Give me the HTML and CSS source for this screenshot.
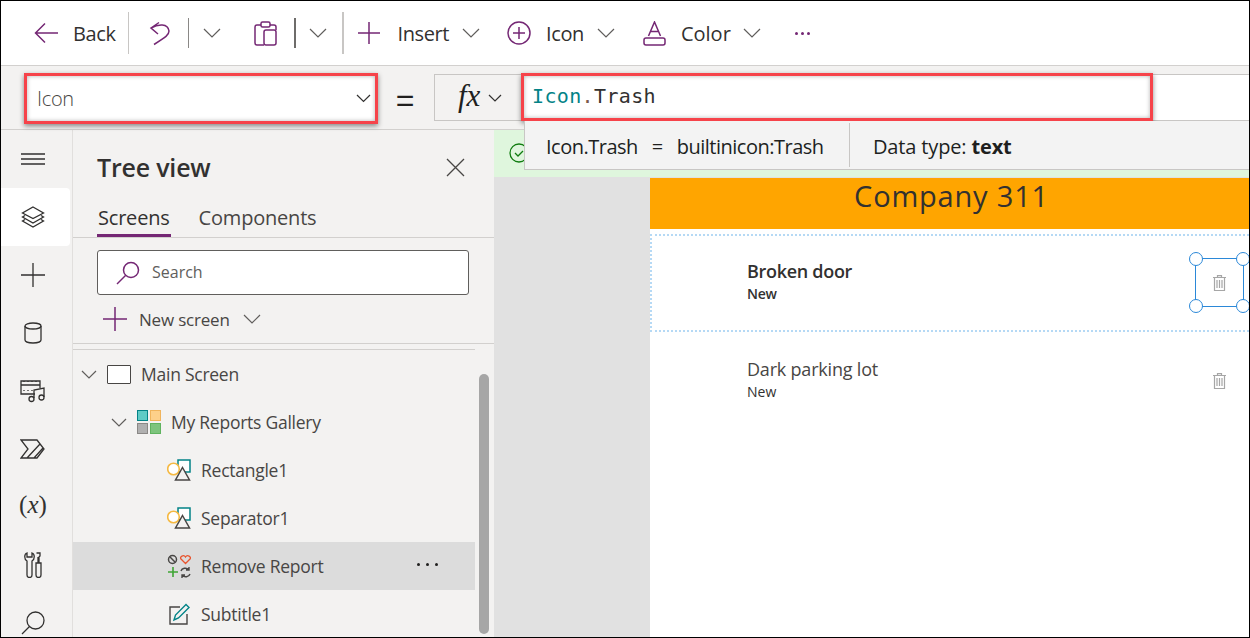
FILE: index.html
```html
<!DOCTYPE html>
<html lang="en">
<head>
    <meta charset="UTF-8">
    <meta name="viewport" content="width=device-width, initial-scale=1.0">
    <title>Tree view</title>
    <link rel="stylesheet" href="styles.css">
</head>
<body>
<div class="frame">
    <!-- command bar -->
    <div class="toolbar">
        <svg class="ic back-ic" width="24" height="22" viewBox="0 0 24 22"><path d="M24 11H2M11 1.500L1.500 11l9.500 9.500"/></svg>
        <span class="tb-text back-text">Back</span>
        <span class="sep sep-tall sep-back"></span>
        <svg class="ic undo-ic" width="24" height="28" viewBox="0 0 24 28"><path d="M11 3.500L3 9l7 6M3 9c7-4 17-5 18 3 0 4-3 6-15 13.500"/></svg>
        <span class="sep sep-short sep-undo"></span>
        <svg class="chev chev-undo" width="18" height="10" viewBox="0 0 18 10"><path d="M1 1l8 8 8-8"/></svg>
        <svg class="ic clip-ic" width="23" height="25" viewBox="0 0 23 25"><path d="M7 4H3a2 2 0 0 0-2 2v16a2 2 0 0 0 2 2h7M16 4h4a2 2 0 0 1 2 2v3"/><rect x="7" y="1" width="9" height="5" rx="1.500"/><rect x="10" y="9" width="12" height="15" rx="2"/></svg>
        <span class="sep sep-short sep-dark sep-clip"></span>
        <svg class="chev chev-clip" width="18" height="10" viewBox="0 0 18 10"><path d="M1 1l8 8 8-8"/></svg>
        <span class="sep sep-tall sep-wide sep-insert"></span>
        <svg class="ic plus-ic" width="22" height="22" viewBox="0 0 22 22"><path d="M11 0v22M0 11h22"/></svg>
        <span class="tb-text insert-text">Insert</span>
        <svg class="chev chev-insert" width="18" height="10" viewBox="0 0 18 10"><path d="M1 1l8 8 8-8"/></svg>
        <svg class="ic circle-ic" width="24" height="24" viewBox="0 0 24 24"><circle cx="12" cy="12" r="11"/><path d="M12 6v12M6 12h12"/></svg>
        <span class="tb-text icon-text">Icon</span>
        <svg class="chev chev-icon" width="18" height="10" viewBox="0 0 18 10"><path d="M1 1l8 8 8-8"/></svg>
        <svg class="ic color-ic" width="23" height="25" viewBox="0 0 23 25"><path d="M5.500 15L11.500 1l6 14M7.500 10.500h8"/><rect x="1" y="17" width="21" height="7" rx="2"/></svg>
        <span class="tb-text color-text">Color</span>
        <svg class="chev chev-color" width="18" height="10" viewBox="0 0 18 10"><path d="M1 1l8 8 8-8"/></svg>
        <span class="more-dots"><i></i><i></i><i></i></span>
    </div>

    <!-- formula bar -->
    <div class="formula-bar">
        <div class="prop-select">
            <span>Icon</span>
            <svg class="chev-dark" width="15" height="9" viewBox="0 0 15 9"><path d="M1 1l6.500 6.500L14 1"/></svg>
        </div>
        <span class="equals">=</span>
        <div class="fx-box">
            <span class="fx">fx</span>
            <svg class="chev-dark" width="14" height="8" viewBox="0 0 14 8"><path d="M1 1l6 6 6-6"/></svg>
        </div>
        <div class="formula-input"><span class="tok">Icon</span><span class="dot">.</span>Trash</div>
        <div class="red-box red-prop"></div>
        <div class="red-box red-formula"></div>
    </div>

    <div class="main">
        <!-- left rail -->
        <div class="rail">
            <div class="rail-btn"><svg width="26" height="12" viewBox="0 0 26 12"><path d="M1 1h24M1 6h24M1 11h24"/></svg></div>
            <div class="rail-btn rail-active"><svg width="24" height="22" viewBox="0 0 24 22"><path d="M12 1l10.500 6L12 12.500 1.500 7zM4 9.500L1.500 11 12 17l10.500-6L20 9.500M4 13.500L1.500 15 12 21l10.500-6L20 13.500"/></svg></div>
            <div class="rail-btn"><svg width="26" height="26" viewBox="0 0 26 26"><path d="M13 1v24M1 13h24"/></svg></div>
            <div class="rail-btn"><svg width="18" height="22" viewBox="0 0 18 22"><ellipse cx="9" cy="4" rx="8" ry="3"/><path d="M1 4v14c0 1.700 3.600 3 8 3s8-1.300 8-3V4"/></svg></div>
            <div class="rail-btn"><svg width="26" height="23" viewBox="0 0 26 23"><path d="M15 14H1V1h19v7M1 5h19M4 1v1M8 1v1M12 1v1M16 1v1M4 10v1M8 10v1M12 10v1"/><path d="M14 18V10l10-2v9"/><circle cx="11.500" cy="19" r="2.500"/><circle cx="21.500" cy="17.500" r="2.500"/></svg></div>
            <div class="rail-btn"><svg width="26" height="20" viewBox="0 0 26 20"><path d="M1 1h16l7 9-7 9H1l7-9zM7 19L20 5M14 19l9-10"/></svg></div>
            <div class="rail-btn rail-var">(<i>x</i>)</div>
            <div class="rail-btn"><svg width="18" height="26" viewBox="0 0 18 26"><path d="M3 1C0 2 0 7 3 9v14a2.500 2.500 0 0 0 5 0V9c3-2 3-7 0-8v4H3zM12.500 1H16v3l-1 1v6M14 5v6M12 11h5v12a2.500 2.500 0 0 1-5 0z"/></svg></div>
            <div class="rail-btn"><svg width="24" height="24" viewBox="0 0 24 24"><circle cx="14.500" cy="9.500" r="8.500"/><path d="M8.500 15.500L1 23"/></svg></div>
        </div>

        <!-- tree panel -->
        <div class="panel">
            <div class="panel-head">
                <span class="panel-title">Tree view</span>
                <svg class="close-ic" width="19" height="19" viewBox="0 0 19 19"><path d="M1 1l17 17M18 1L1 18"/></svg>
            </div>
            <div class="tabs">
                <span class="tab tab-on">Screens</span>
                <span class="tab">Components</span>
            </div>
            <div class="search-box">
                <svg class="ic" width="24" height="24" viewBox="0 0 24 24"><circle cx="15" cy="9" r="7.500"/><path d="M9.500 14.500L1 23"/></svg>
                <span class="search-text">Search</span>
            </div>
            <div class="new-screen">
                <svg class="ic" width="24" height="24" viewBox="0 0 24 24"><path d="M12 0v24M0 12h24"/></svg>
                <span>New screen</span>
                <svg class="chev ns-chev" width="18" height="10" viewBox="0 0 18 10"><path d="M1 1l8 8 8-8"/></svg>
            </div>
            <div class="tree">
                <div class="node lvl-0">
                    <svg class="chev" width="16" height="9" viewBox="0 0 16 9"><path d="M1 1l7 7 7-7"/></svg>
                    <span class="screen-ic"></span>
                    <span>Main Screen</span>
                </div>
                <div class="node lvl-1">
                    <svg class="chev" width="16" height="9" viewBox="0 0 16 9"><path d="M1 1l7 7 7-7"/></svg>
                    <span class="gallery-ic"><i class="g1"></i><i class="g2"></i><i class="g3"></i><i class="g4"></i></span>
                    <span>My Reports Gallery</span>
                </div>
                <div class="node lvl-2">
                    <svg width="24" height="24" viewBox="0 0 24 24"><rect x="11" y="2" width="12" height="12" fill="#fff" stroke="#038387" stroke-width="1.500"/><circle cx="6.500" cy="11" r="5.800" fill="#fff" stroke="#f5b942" stroke-width="1.600"/><path d="M15.500 9.500l7 12.500h-14z" fill="#f3f2f1" stroke="#484644" stroke-width="1.500"/></svg>
                    <span>Rectangle1</span>
                </div>
                <div class="node lvl-2">
                    <svg width="24" height="24" viewBox="0 0 24 24"><rect x="11" y="2" width="12" height="12" fill="#fff" stroke="#038387" stroke-width="1.500"/><circle cx="6.500" cy="11" r="5.800" fill="#fff" stroke="#f5b942" stroke-width="1.600"/><path d="M15.500 9.500l7 12.500h-14z" fill="#f3f2f1" stroke="#484644" stroke-width="1.500"/></svg>
                    <span>Separator1</span>
                </div>
                <div class="node lvl-2 node-on">
                    <svg width="24" height="24" viewBox="0 0 24 24" fill="none"><circle cx="5.500" cy="5.500" r="4" stroke="#484644" stroke-width="1.500"/><path d="M2.800 2.800l5.400 5.400" stroke="#484644" stroke-width="1.500"/><path d="M18.500 9.500l-4.500-4.500c-1.800-2.400 2.800-4.800 4.500-2 1.700-2.800 6.300-.4 4.500 2z" stroke="#e8542e" stroke-width="1.300"/><path d="M6 13v10M1 18h10" stroke="#3fa535" stroke-width="1.600"/><path d="M14 17c.8-3 5.500-4 8-1M23 20c-1 3-5.500 4-8 1M22 13v3h-3M15 24v-3h3" stroke="#484644" stroke-width="1.400"/></svg>
                    <span>Remove Report</span>
                    <span class="node-more"><i></i><i></i><i></i></span>
                </div>
                <div class="node lvl-2">
                    <svg width="24" height="24" viewBox="0 0 24 24" fill="none"><path d="M20 12v10H3V5h10" stroke="#484644" stroke-width="1.400"/><path d="M7 18l1.500-5L19 2.500l3 3L11.500 16z" stroke="#038387" stroke-width="1.400"/></svg>
                    <span>Subtitle1</span>
                </div>
                <div class="scroll-thumb"></div>
            </div>
        </div>

        <!-- canvas -->
        <div class="canvas">
            <div class="status-bar">
                <svg width="20" height="20" viewBox="0 0 20 20" fill="none"><circle cx="10" cy="10" r="9" stroke="#107c10" stroke-width="1.300"/><path d="M6 10l3 3 5-5" stroke="#107c10" stroke-width="1.300"/></svg>
            </div>
            <div class="app-area">
                <div class="app-screen">
                    <div class="app-header">Company 311</div>
                    <div class="gallery-row row-first">
                        <div class="row-text">
                            <div class="row-title row-bold">Broken door</div>
                            <div class="row-sub row-bold">New</div>
                        </div>
                        <svg class="trash" width="13" height="16" viewBox="0 0 13 16"><path d="M0 2.500h13M4.500 2.500V.7h4v1.800M1.500 2.500v13h10v-13M4 5v8M6.500 5v8M9 5v8"/></svg>
                        <div class="sel-box">
                            <i class="handle h-tl"></i><i class="handle h-tr"></i><i class="handle h-bl"></i><i class="handle h-br"></i>
                        </div>
                    </div>
                    <div class="gallery-row">
                        <div class="row-text">
                            <div class="row-title">Dark parking lot</div>
                            <div class="row-sub">New</div>
                        </div>
                        <svg class="trash" width="13" height="16" viewBox="0 0 13 16"><path d="M0 2.500h13M4.500 2.500V.7h4v1.800M1.500 2.500v13h10v-13M4 5v8M6.500 5v8M9 5v8"/></svg>
                    </div>
                </div>
            </div>
        </div>
    </div>

    <!-- formula hint, drops over the canvas -->
    <div class="hint">
        <div class="hint-def"><span>Icon.Trash</span><span class="hint-eq">=</span><span>builtinicon:Trash</span></div>
        <div class="hint-type">Data type: <b>text</b></div>
    </div>
</div>
</body>
</html>
```

FILE: styles.css
```css
* {
    box-sizing: border-box;
}

body {
    margin: 0;
    font-family: 'Open Sans', 'Noto Sans', sans-serif;
    color: #323130;
    background: #fff;
}

svg {
    display: block;
    flex: none;
}

.frame {
    position: relative;
    width: 1250px;
    height: 638px;
    border: 1px solid #000;
    display: flex;
    flex-direction: column;
    overflow: hidden;
}

/* command bar */
.toolbar {
    height: 65px;
    flex: none;
    display: flex;
    align-items: center;
    background: #fff;
    border-bottom: 1px solid #d2d0ce;
}

.ic path, .ic rect, .ic circle {
    fill: none;
    stroke: #742774;
    stroke-width: 1.5;
}

.chev path {
    fill: none;
    stroke: #605e5c;
    stroke-width: 1.2;
}

.chev-dark path {
    fill: none;
    stroke: #323130;
    stroke-width: 1.2;
}

.tb-text {
    font-size: 20px;
    color: #323130;
    letter-spacing: -0.4px;
}

.sep {
    display: block;
    flex: none;
    width: 1px;
}

.sep-tall {
    height: 42px;
    background: #c8c6c4;
}

.sep-wide {
    width: 2px;
}

.sep-short {
    height: 30px;
    background: #8a8886;
}

.sep-dark {
    width: 2px;
    background: #6e6c6a;
}

.back-ic { margin-left: 33px; }
.back-text { margin-left: 15px; }
.sep-back { margin-left: 12px; }
.undo-ic { margin-left: 19px; }
.sep-undo { margin-left: 16px; }
.chev-undo { margin-left: 14px; }
.clip-ic { margin-left: 33px; }
.sep-clip { margin-left: 17px; }
.chev-clip { margin-left: 13px; }
.sep-insert { margin-left: 15px; }
.plus-ic { margin-left: 14px; }
.insert-text { margin-left: 18px; }
.chev-insert { margin-left: 13px; }
.circle-ic { margin-left: 27px; }
.icon-text { margin-left: 15px; }
.chev-icon { margin-left: 13px; }
.color-ic { margin-left: 28px; }
.color-text { margin-left: 15px; letter-spacing: 0; }
.chev-color { margin-left: 12px; }

.more-dots {
    display: flex;
    gap: 3px;
    margin-left: 34px;
}

.more-dots i {
    width: 3px;
    height: 3px;
    border-radius: 50%;
    background: #742774;
}

/* formula bar */
.formula-bar {
    position: relative;
    height: 64px;
    flex: none;
    display: flex;
    align-items: flex-start;
    padding-top: 8px;
    background: #f3f2f1;
    border-bottom: 1px solid #d2d0ce;
}

.prop-select {
    width: 350px;
    height: 48px;
    margin-left: 25px;
    padding: 0 5px 0 11px;
    display: flex;
    align-items: center;
    justify-content: space-between;
    background: #fff;
    font-size: 20px;
    font-weight: 300;
    color: #484644;
    letter-spacing: -0.3px;
}

.equals {
    width: 58px;
    text-align: center;
    font-family: 'Liberation Sans', sans-serif;
    font-size: 32px;
    line-height: 48px;
    padding-top: 2px;
    color: #201f1e;
}

.fx-box {
    width: 88px;
    height: 47px;
    display: flex;
    align-items: center;
    padding-left: 23px;
    gap: 8px;
    border: 1px solid #c8c6c4;
    border-right: 0;
    background: #f3f2f1;
}

.fx {
    font-family: 'Liberation Serif', serif;
    font-style: italic;
    font-size: 31px;
    line-height: 30px;
    padding-bottom: 4px;
    color: #201f1e;
}

.formula-input {
    flex: 1;
    height: 47px;
    padding: 8px 0 0 10px;
    background: #fff;
    border-top: 1px solid #c8c6c4;
    border-bottom: 1px solid #c8c6c4;
    font-family: 'DejaVu Sans Mono', monospace;
    font-size: 20px;
    line-height: 26px;
    letter-spacing: 0.35px;
    color: #323130;
}

.tok {
    color: #038387;
}

.dot {
    color: #7a5a4a;
}

.red-box {
    position: absolute;
    border: 3px solid #f6434a;
    box-shadow: 0 2px 5px rgba(0, 0, 0, 0.45), inset 0 0 4px rgba(0, 0, 0, 0.3);
}

.red-prop {
    left: 23px;
    top: 7px;
    width: 354px;
    height: 51px;
}

.red-formula {
    left: 520px;
    top: 7px;
    width: 632px;
    height: 48px;
}

/* main area */
.main {
    flex: 1;
    min-height: 0;
    display: flex;
}

.rail {
    width: 72px;
    flex: none;
    display: flex;
    flex-direction: column;
    background: #f3f2f1;
    border-right: 1px solid #e1dfdd;
}

.rail-btn {
    height: 58px;
    width: 69px;
    flex: none;
    display: flex;
    align-items: center;
    justify-content: center;
    padding-right: 5px;
}

.rail-btn path, .rail-btn circle, .rail-btn ellipse {
    fill: none;
    stroke: #323130;
    stroke-width: 1.3;
}

.rail-active {
    background: #fff;
    border-radius: 0 4px 4px 0;
}

.rail-var {
    font-family: 'Liberation Serif', serif;
    font-size: 25px;
    padding-bottom: 4px;
    color: #323130;
}

/* tree panel */
.panel {
    width: 421px;
    flex: none;
    display: flex;
    flex-direction: column;
    background: #f3f2f1;
}

.panel-head {
    height: 74px;
    flex: none;
    display: flex;
    align-items: center;
    justify-content: space-between;
    padding: 0 29px 0 24px;
}

.panel-title {
    font-size: 25px;
    font-weight: 600;
    letter-spacing: -0.2px;
    color: #323130;
}

.close-ic path {
    stroke: #484644;
    stroke-width: 1.3;
    fill: none;
}

.tabs {
    height: 34px;
    flex: none;
    display: flex;
    gap: 27px;
    padding-left: 24px;
    border-bottom: 1px solid #d2d0ce;
}

.tab {
    height: 33px;
    padding: 0 1px;
    font-size: 20px;
    line-height: 28px;
    letter-spacing: -0.2px;
    color: #484644;
}

.tab-on {
    border-bottom: 3px solid #742774;
    color: #323130;
}

.search-box {
    width: 372px;
    height: 45px;
    flex: none;
    margin: 12px 0 0 24px;
    padding-left: 18px;
    display: flex;
    align-items: center;
    gap: 12px;
    background: #fff;
    border: 1px solid #605e5c;
    border-radius: 3px;
    font-size: 16px;
    color: #605e5c;
}

.search-text {
    padding-bottom: 2px;
}

.new-screen {
    height: 49px;
    flex: none;
    display: flex;
    align-items: center;
    padding-left: 30px;
    gap: 12px;
    font-size: 17px;
    letter-spacing: -0.2px;
    color: #484644;
    border-bottom: 1px solid #d2d0ce;
}

.ns-chev {
    margin-left: 1px;
}

.tree {
    position: relative;
    flex: 1;
    min-height: 0;
    margin-top: 5px;
    width: 402px;
    border-top: 1px solid #d2d0ce;
}

.node {
    height: 48px;
    display: flex;
    align-items: center;
    font-size: 17.5px;
    letter-spacing: -0.25px;
    color: #484644;
}

.node svg {
    margin-right: 10px;
}

.lvl-0 {
    padding-left: 8px;
}

.lvl-0 .chev {
    margin-right: 10px;
}

.lvl-1 {
    padding-left: 38px;
}

.lvl-2 {
    padding-left: 94px;
}

.screen-ic {
    width: 24px;
    height: 19px;
    margin-right: 10px;
    background: #fff;
    border: 1.5px solid #484644;
    border-radius: 1px;
}

.gallery-ic {
    width: 24px;
    height: 24px;
    margin-right: 10px;
    display: grid;
    grid-template-columns: 11px 11px;
    gap: 2px;
}

.gallery-ic i {
    display: block;
}

.g1 { background: #5fcbc6; border: 1px solid #038387; }
.g2 { background: #fdd08a; border: 1px solid #f0b45c; }
.g3 { background: #b0b0b0; border: 1px solid #8a8886; }
.g4 { background: #7dc47d; border: 1px solid #5fb35f; }

.node-on {
    background: #dcdcdc;
}

.node-more {
    display: flex;
    gap: 6px;
    margin-left: auto;
    margin-right: 37px;
    padding-bottom: 4px;
}

.node-more i {
    width: 3px;
    height: 3px;
    border-radius: 50%;
    background: #201f1e;
}

.scroll-thumb {
    position: absolute;
    left: 406px;
    top: 24px;
    width: 10px;
    height: 260px;
    background: #a6a6a6;
    border-radius: 5px;
}

/* canvas */
.canvas {
    flex: 1;
    min-width: 0;
    display: flex;
    flex-direction: column;
    background: #e1e1e1;
}

.status-bar {
    height: 47px;
    flex: none;
    padding: 13px 0 0 15px;
    background: #dff6dd;
}

.app-area {
    flex: 1;
    min-height: 0;
    padding: 1px 0 0 156px;
}

.app-screen {
    height: 100%;
    background: #fff;
}

.app-header {
    height: 51px;
    padding-left: 4px;
    background: #ffa500;
    text-align: center;
    font-size: 29px;
    line-height: 36px;
    letter-spacing: 0.8px;
    color: #323130;
}

.gallery-row {
    position: relative;
    height: 98px;
    display: flex;
    align-items: center;
    justify-content: space-between;
    padding: 0 23px 0 97px;
}

.row-first {
    margin-top: 5px;
    padding-left: 95px;
    border: 2px dotted #b5d9f5;
    border-right: 0;
}

.row-text {
    padding-bottom: 1px;
}

.row-first .row-text {
    padding-bottom: 2px;
}

.row-title {
    font-size: 18px;
    line-height: 23px;
    letter-spacing: -0.2px;
    color: #484644;
}

.row-sub {
    font-size: 14px;
    line-height: 22px;
    color: #323130;
}

.row-bold {
    font-weight: 600;
    letter-spacing: -0.3px;
    color: #323130;
}

.trash path {
    fill: none;
    stroke: #a6a6a6;
    stroke-width: 1.2;
}

.sel-box {
    position: absolute;
    right: 5px;
    top: 22px;
    width: 49px;
    height: 49px;
    border: 1.5px solid #2b88d8;
}

.handle {
    position: absolute;
    width: 14px;
    height: 14px;
    background: #fff;
    border: 1.5px solid #2b88d8;
    border-radius: 50%;
}

.h-tl { left: -7px; top: -7px; }
.h-tr { right: -7px; top: -7px; }
.h-bl { left: -7px; bottom: -7px; }
.h-br { right: -7px; bottom: -7px; }

/* hint under the formula */
.hint {
    position: absolute;
    left: 523px;
    top: 120px;
    right: 0;
    height: 49px;
    display: flex;
    align-items: center;
    background: #f3f3f3;
    border-left: 1px solid #c8c6c4;
    border-bottom: 1px solid #c8c6c4;
    font-size: 20px;
    color: #201f1e;
}

.hint-def {
    width: 325px;
    height: 44px;
    display: flex;
    align-items: center;
    padding: 2px 0 0 21px;
    letter-spacing: -0.5px;
    border-right: 1px solid #c8c6c4;
}

.hint-eq {
    margin: 0 14px 0 14px;
}

.hint-type {
    padding: 2px 0 0 23px;
    letter-spacing: -0.15px;
}
```
